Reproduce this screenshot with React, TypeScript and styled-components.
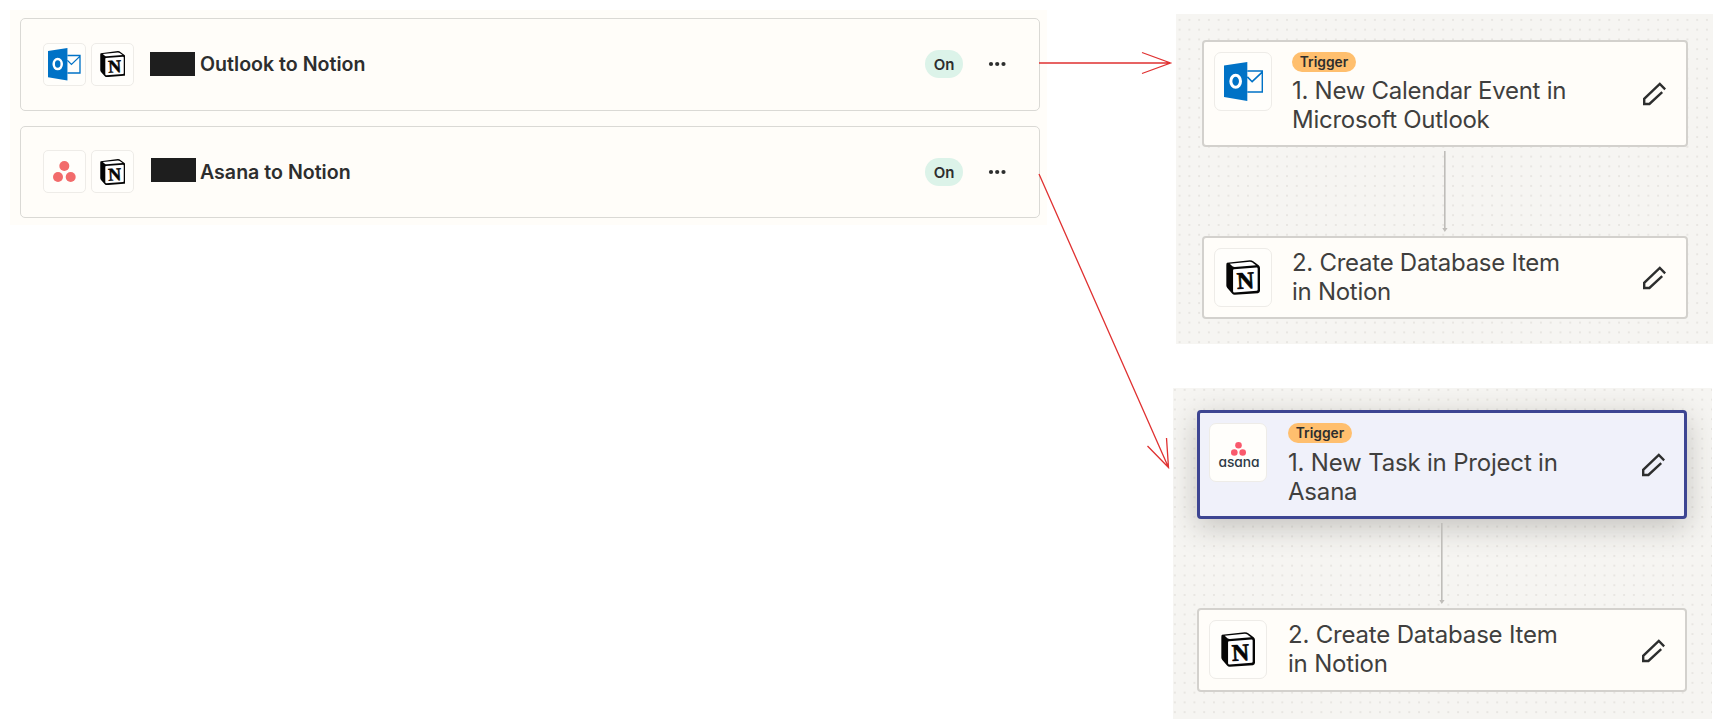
import React from "react";
import styled, { createGlobalStyle, css } from "styled-components";

const GlobalStyle = createGlobalStyle`
	*, *::before, *::after {
		box-sizing: border-box;
	}
	body {
		margin: 0;
		background: #fff;
		color: #2d2e2e;
		font-family: Inter, "Liberation Sans", sans-serif;
	}
	p, h2, h3 {
		margin: 0;
	}
	svg {
		display: block;
	}
`;

const Page = styled.main`
	position: relative;
	display: flex;
	align-items: flex-start;
	justify-content: space-between;
	width: 1723px;
	height: 728px;
	padding: 10px 10px 0 10px;
	overflow: hidden;
`;

const ZapList = styled.section`
	display: flex;
	flex-direction: column;
	gap: 15px;
	width: 1037px;
	height: 215px;
	padding: 8px 7px 7px 10px;
	background: #fffdf9;
`;

const ZapRow = styled.article`
	display: flex;
	align-items: center;
	width: 1020px;
	height: 92.5px;
	padding: 0 33px 0 22px;
	border: 1px solid #dad9d5;
	border-radius: 5px;
`;

const AppIcons = styled.div`
	display: flex;
	gap: 5px;
`;

const Tile = styled.div<{ $large?: boolean }>`
	display: flex;
	flex-shrink: 0;
	align-items: center;
	justify-content: center;
	width: ${(p) => (p.$large ? 58 : 43)}px;
	height: ${(p) => (p.$large ? 59 : 43)}px;
	border: 1px solid #eeece8;
	border-radius: ${(p) => (p.$large ? 7 : 5)}px;
	background: #fffefb;
`;

const Redacted = styled.span<{ $shift: number }>`
	width: 45px;
	height: 24px;
	margin: 0 ${(p) => 5 - p.$shift}px ${(p) => p.$shift * 3}px ${(p) => 16 + p.$shift}px;
	background: #1e1e1e;
`;

const ZapTitle = styled.h2`
	flex: 1;
	font-size: 19.6px;
	font-weight: 600;
	line-height: 24px;
	white-space: nowrap;
`;

const Status = styled.span`
	width: 38px;
	height: 28px;
	margin-right: 25px;
	border-radius: 14px;
	background: #dcf3e9;
	font-size: 15px;
	font-weight: 600;
	line-height: 29px;
	text-align: center;
`;

const Editors = styled.div`
	display: flex;
	flex-direction: column;
	align-items: flex-end;
	gap: 44px;
	padding-top: 4px;
`;

const dots = css`
	background-color: #f6f5f2;
	background-image: radial-gradient(circle, #e8e6e2 0.8px, transparent 1.4px);
	background-size: 9.77px 9.77px;
`;

const Panel = styled.section<{ $active?: boolean }>`
	${dots}
	display: flex;
	flex-direction: column;
	overflow: hidden;
	width: ${(p) => (p.$active ? 539 : 537)}px;
	height: ${(p) => (p.$active ? 331 : 330)}px;
	padding: ${(p) => (p.$active ? "22px 25px 0 24px" : "26px 25px 0 26px")};
	background-position: ${(p) => (p.$active ? "-3px -3px" : "-1.3px 1px")};
	margin-right: ${(p) => (p.$active ? 1 : 0)}px;
	letter-spacing: ${(p) => (p.$active ? -0.19 : -0.27)}px;
`;

const StepCard = styled.article<{ $height: number; $active?: boolean }>`
	display: flex;
	height: ${(p) => p.$height}px;
	padding: 10px 20px 0 10px;
	border: 2px solid #d3d1cd;
	border-radius: 4px;
	background: #fffdf9;
	${(p) =>
		p.$active &&
		css`
			padding: 10px 19px 0 9px;
			border: 3px solid #3d4592;
			background: #f0f1fa;
			box-shadow: 0 8px 30px rgba(45, 40, 32, 0.25);
		`}
`;

const StepBody = styled.div<{ $inset: number }>`
	flex: 1;
	margin-left: ${(p) => p.$inset}px;
`;

const Trigger = styled.span<{ $gap: number }>`
	display: block;
	width: 64px;
	height: 20px;
	margin-bottom: ${(p) => p.$gap}px;
	border-radius: 10px;
	background: #ffbf6e;
	font-size: 13.8px;
	font-weight: 600;
	letter-spacing: 0;
	line-height: 20px;
	text-align: center;
`;

const StepTitle = styled.h3`
	font-size: 24px;
	font-weight: 400;
	line-height: 29.3px;
	color: #403f3e;
	white-space: pre-line;
`;

const EditSlot = styled.div`
	align-self: center;
	padding-bottom: 9px;
`;

const Connector = styled.div<{ $height: number }>`
	display: flex;
	justify-content: center;
	height: ${(p) => p.$height}px;
	padding-top: 4px;
`;

const Arrows = styled.svg`
	position: absolute;
	top: 0;
	left: 0;
	pointer-events: none;
`;

function OutlookLogo({ size }: { size: number }) {
	return (
		<svg width={size} height={size} viewBox='0 0 97 97'>
			<path d='M0 9 58 0v97L0 87Z' fill='#0072c6' />
			<ellipse cx='29' cy='48' rx='12' ry='15' fill='none' stroke='#fff' strokeWidth='7.5' />
			<path d='M58 22.500H95.500V74.500H58M58 37l12 12 25-24' fill='none' stroke='#0072c6' strokeWidth='4' />
		</svg>
	);
}

function NotionLogo({ size }: { size: number }) {
	return (
		<svg width={size} height={size * 1.03} viewBox='0 0 101 103'>
			<path d='M3 8 71 0q6 0 11 4l15 11q4 3 4 8v68q0 6-6 7l-69 5q-5 0-8-4L4 83q-3-4-3-8V14q0-5 2-6Z' fill='#050505' />
			<path d='M11 11 71 5q4 0 7 2l11 8-63 5q-4 0-7-2Z' fill='#fff' />
			<path d='M24 27 91 22q3 0 3 3v63q0 3-3 3l-66 5q-4 0-4-4V30q0-3 3-3Z' fill='#fff' />
			<text
				x='58'
				y='84'
				fontFamily='"Liberation Serif", serif'
				fontSize='71'
				fontWeight='700'
				letterSpacing='0'
				textAnchor='middle'
				stroke='#050505'
				strokeWidth='2'
				fill='#050505'
				transform='rotate(-3 58 62)'
			>
				N
			</text>
		</svg>
	);
}

function AsanaDots({ width, color }: { width: number; color: string }) {
	return (
		<svg width={width} height={width * 0.94} viewBox='0 0 68 64'>
			<g fill={color}>
				<circle cx='34' cy='15' r='15' />
				<circle cx='15' cy='48' r='15' />
				<circle cx='53' cy='48' r='15' />
			</g>
		</svg>
	);
}

const AsanaStack = styled.div`
	display: flex;
	flex-direction: column;
	align-items: center;
	padding-top: 6px;
	padding-left: 2px;
	color: #2e3a46;
	font-size: 13.8px;
	font-weight: 500;
	letter-spacing: -0.1px;
	line-height: 13px;
	font-feature-settings: "cv11";
`;

function Pencil() {
	return (
		<svg width='24' height='24' viewBox='0 0 24 24' fill='none' stroke='#2d2e2e' strokeWidth='2.400'>
			<path d='M20.200 10.200 7.400 22H2.200v-5.200L17.800 2l5.400 5.400' />
		</svg>
	);
}

function More() {
	return (
		<svg width='18' height='6' viewBox='0 0 18 6' fill='#2d2e2e'>
			<circle cx='3' cy='3' r='2.100' />
			<circle cx='9.200' cy='3' r='2.100' />
			<circle cx='15.500' cy='3' r='2.100' />
		</svg>
	);
}

function Link({ height }: { height: number }) {
	return (
		<Connector $height={height}>
			<svg width='8' height='81' viewBox='0 0 8 81' fill='#bfbdb9'>
				<path d='M3 0h1.600v77h2L3.800 81 1.300 77H3Z' />
			</svg>
		</Connector>
	);
}

interface IZap {
	icon: React.ReactNode;
	title: string;
	shift: number;
}

const zaps: IZap[] = [
	{ icon: <OutlookLogo size={32.5} />, title: "Outlook to Notion", shift: 0 },
	{ icon: <AsanaDots width={22.7} color='#f26b6b' />, title: "Asana to Notion", shift: 1 },
];

interface IStep {
	icon: React.ReactNode;
	title: string;
	height: number;
	inset?: number;
	trigger?: boolean;
	active?: boolean;
}

function Step({ icon, title, height, inset = 20, trigger, active }: IStep) {
	return (
		<StepCard $height={height} $active={active}>
			<Tile $large>{icon}</Tile>
			<StepBody $inset={inset}>
				{trigger && <Trigger $gap={active ? 5 : 4}>Trigger</Trigger>}
				<StepTitle>{title}</StepTitle>
			</StepBody>
			<EditSlot>
				<Pencil />
			</EditSlot>
		</StepCard>
	);
}

export default function App() {
	return (
		<>
			<GlobalStyle />
			<Page>
				<ZapList>
					{zaps.map((zap) => (
						<ZapRow key={zap.title}>
							<AppIcons>
								<Tile>{zap.icon}</Tile>
								<Tile>
									<NotionLogo size={25.5} />
								</Tile>
							</AppIcons>
							<Redacted $shift={zap.shift} />
							<ZapTitle>{zap.title}</ZapTitle>
							<Status>On</Status>
							<More />
						</ZapRow>
					))}
				</ZapList>

				<Editors>
					<Panel>
						<Step
							trigger
							height={107}
							icon={<OutlookLogo size={39} />}
							title={"1. New Calendar Event in\nMicrosoft Outlook"}
						/>
						<Link height={89} />
						<Step height={83} icon={<NotionLogo size={34} />} title={"2. Create Database Item\nin Notion"} />
					</Panel>
					<Panel $active>
						<Step
							trigger
							active
							height={109}
							inset={21}
							icon={
								<AsanaStack>
									<AsanaDots width={15} color='#f9596c' />
									asana
								</AsanaStack>
							}
							title={"1. New Task in Project in\nAsana"}
						/>
						<Link height={89} />
						<Step
							height={84}
							inset={21}
							icon={<NotionLogo size={34} />}
							title={"2. Create Database Item\nin Notion"}
						/>
					</Panel>
				</Editors>

				<Arrows width='1723' height='728' fill='none' stroke='#e03131' strokeWidth='1.300'>
					<path d='M1039 63H1170.500M1142 52.500 1170.500 63 1142 73.500' />
					<path d='M1039 174 1168.500 467.500M1147.500 446 1168.500 467.500 1166.500 438' />
				</Arrows>
			</Page>
		</>
	);
}
